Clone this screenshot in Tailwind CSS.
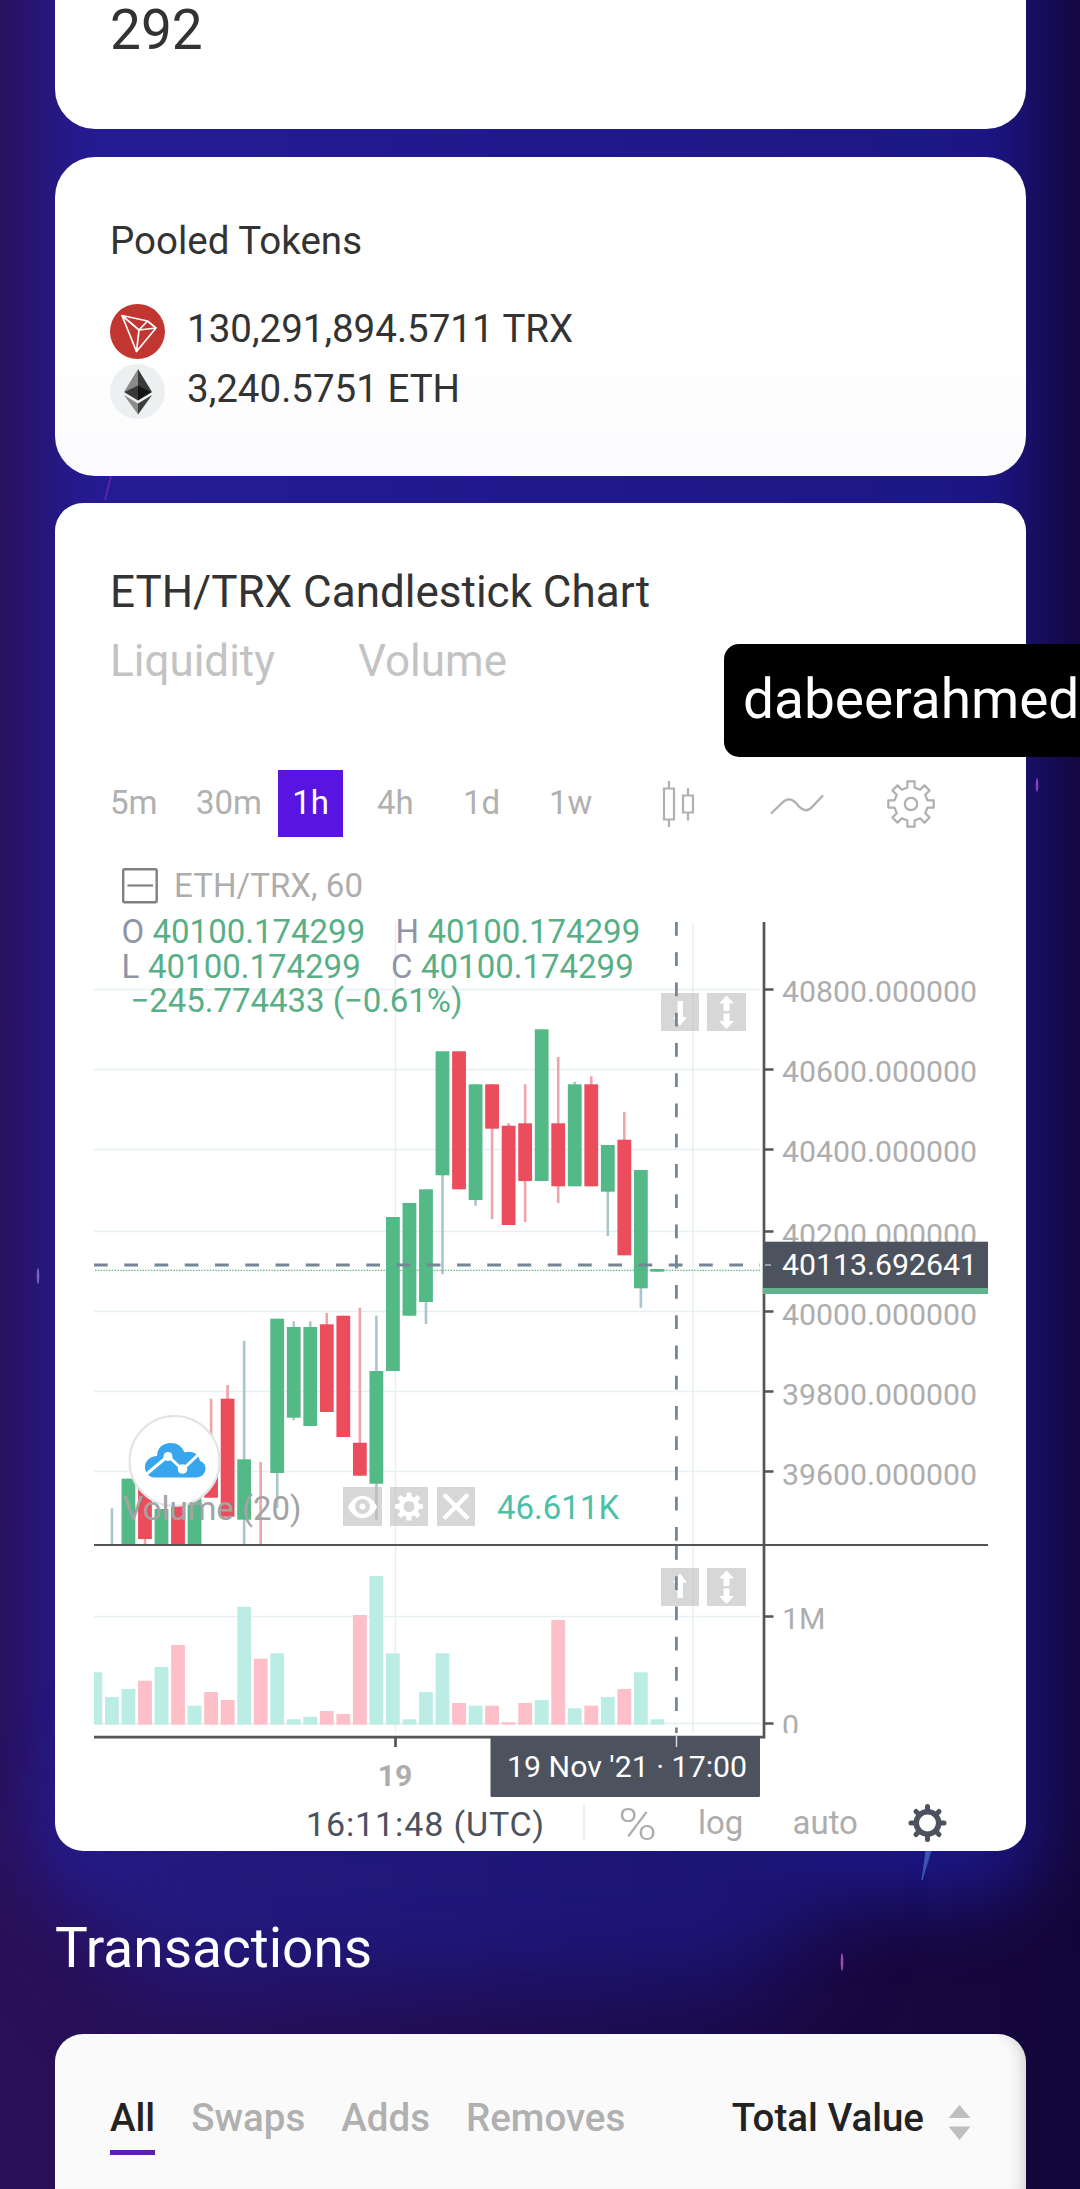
<!DOCTYPE html>
<html lang="en">
  <head>
    <meta charset="UTF-8">
    <title>ETH/TRX Pool</title>
    <script src="https://cdn.jsdelivr.net/npm/@tailwindcss/browser@4"></script>
  </head>

  <body class="relative w-[1080px] h-[2189px] overflow-hidden bg-linear-to-r from-[#2a1058] to-[#13063a] font-[Roboto,sans-serif] text-[#333]">

    <!-- background glow -->
    <div class="absolute inset-0 overflow-hidden">
      <div class="absolute left-[36px] -top-[200px] w-[1002px] h-[2100px] rounded-[60px] bg-linear-to-r from-[#251c94] to-[#1b1684] blur-[36px]"></div>
      <div class="absolute left-[90px] top-[1760px] w-[720px] h-[230px] rounded-[100px] bg-linear-to-r from-[#241a80] to-[#1a1474] blur-[50px]"></div>
    </div>
    <svg class="absolute inset-0" width="1080" height="2189" viewBox="0 0 1080 2189">
      <path d="M111 476L105 500" stroke="#5a22a8" stroke-width="2"/>
      <path d="M931 1851L922 1880L926 1851Z" fill="#3b55b8" stroke="#3b55b8" stroke-width="1"/>
      <ellipse cx="842" cy="1962" rx="1.3" ry="9" fill="#9b4db4"/>
      <ellipse cx="1037" cy="785" rx="1.3" ry="7" fill="#8a3fc0"/>
      <ellipse cx="38" cy="1276" rx="1.3" ry="8" fill="#7a5fc0"/>
    </svg>

    <main class="relative px-[55px] pr-[54px]">
      <section class="h-[129px] bg-white rounded-b-[40px] px-[55px]">
        <div class="text-[55px] leading-[60px]">292</div>
      </section>

      <section class="mt-7 h-[319px] bg-linear-to-b from-white from-60% to-[#fbfafd] rounded-[40px] px-[55px] pt-[59px]">
        <h2 class="text-[38.5px] leading-[50px]">Pooled Tokens</h2>
        <div class="mt-[35px] flex items-center h-[60px] gap-[22px]">
          <svg class="size-[55px]" viewBox="0 0 55 55">
            <circle cx="27.5" cy="27.5" r="27.5" fill="#c23631"/>
            <g fill="none" stroke="#fff" stroke-width="1.7" stroke-linejoin="round">
              <path d="M12 11.500L37.500 17L46 24L26.500 47.500Z"/>
              <path d="M12 11.500L29 26L26.500 47.500M29 26L46 24M29 26L37.500 17"/>
            </g>
          </svg>
          <span class="text-[38.5px] leading-[50px] pb-[4px]">130,291,894.5711 TRX</span>
        </div>
        <div class="flex items-center h-[60px] gap-[22px]">
          <svg class="size-[55px]" viewBox="0 0 55 55">
            <circle cx="27.5" cy="27.5" r="27.5" fill="#ecf0f1"/>
            <path d="M28 5L14 28L28 22Z" fill="#8a8a8a"/>
            <path d="M28 5L42 28L28 22Z" fill="#383838"/>
            <path d="M28 21.500L14 28L28 36.500Z" fill="#393939"/>
            <path d="M28 21.500L42 28L28 36.500Z" fill="#141414"/>
            <path d="M14 31L28 39.500V50.500Z" fill="#8c8c8c"/>
            <path d="M42 31L28 39.500V50.500Z" fill="#3c3c3b"/>
          </svg>
          <span class="text-[38.5px] leading-[50px] pb-[4px]">3,240.5751 ETH</span>
        </div>
      </section>

      <section class="mt-[27px] h-[1348px] bg-white rounded-[28px] pt-[59px] overflow-hidden">
        <h2 class="px-[55px] text-[44px] leading-[60px]">ETH/TRX Candlestick Chart</h2>
        <div class="mt-[9px] px-[55px] flex text-[44px] leading-[60px] text-[#c3c3c3]">
          <span class="w-[248px]">Liquidity</span>
          <span>Volume</span>
        </div>

        <!-- chart toolbar -->
        <div class="mt-[79px] pl-[55px] flex items-center h-[67px] text-[33px] leading-[44px] text-[#b0b0b0]">
          <span class="w-[86px] pb-[2px]">5m</span>
          <span class="w-[82px] pb-[2px]">30m</span>
          <span class="w-[65px] h-full pb-[2px] flex items-center justify-center bg-[#5814e0] text-white">1h</span>
          <span class="w-[87px] pl-[34px] pb-[2px]">4h</span>
          <span class="w-[86px] pl-[33px] pb-[2px]">1d</span>
          <span class="w-[92px] pl-[33px] pb-[2px]">1w</span>
          <svg class="ml-[54px] w-[34px] h-12" viewBox="0 0 34 48" fill="none" stroke="#b0b0b0" stroke-width="2.2">
            <path d="M7 1V8M7 40V47M2 8.500H12V39.500H2ZM26 8V15M26 33V40.500M21 15.500H31V32.500H21Z"/>
          </svg>
          <svg class="ml-[74px] w-[54px] h-6" viewBox="0 0 54 24" fill="none" stroke="#b0b0b0" stroke-width="2.4">
            <path d="M1 21.500L12 11C17 6 21 6 26 11L29 14.500C34 19.500 38 19.500 42 15L53 3.500"/>
          </svg>
          <svg class="ml-[62px] size-[50px]" viewBox="-25 -25 50 50" fill="none" stroke="#b0b0b0" stroke-width="2.2" stroke-linejoin="round">
            <path id="gearOutline"/>
            <circle r="6.200"/>
          </svg>
        </div>

        <svg class="mt-2 block" width="971" height="1006" viewBox="55 845 971 1006">
          <!-- grid -->
          <g stroke="#e6f0f2" stroke-width="1.500">
            <path d="M94 989.500H760M94 1069.500H760M94 1149.500H760M94 1231.500H760M94 1311.500H760M94 1391.500H760M94 1471.500H760M94 1616.500H760M94 1723.500H760"/>
            <path d="M395.500 923V1733M693 923V1733"/>
          </g>

          <g id="volumeBars"></g>
          <g id="candles"></g>

          <circle cx="174.500" cy="1461" r="45" fill="#fff" stroke="#e3e3e6" stroke-width="2"/>
          <g>
            <path d="M155 1477.500C148 1477.500 145 1472 145 1467C145 1461 150 1456 157 1456C157 1448 163 1443 170.500 1443C177 1443 182 1446 184.500 1452.500C191 1450.500 198.500 1453 200 1461C203.500 1462 205.500 1465 205.500 1468.500C205.500 1473.500 201.500 1477.500 196 1477.500Z" fill="#37a6ef"/>
            <path d="M146 1474.500L168 1456L182.500 1469.500L199 1454" fill="none" stroke="#fff" stroke-width="3"/>
            <circle cx="168" cy="1456.500" r="4.500" fill="#fff"/>
            <circle cx="182.500" cy="1469" r="4.800" fill="#fff"/>
          </g>

          <!-- pane buttons -->
          <g fill="#bdbdbd" fill-opacity="0.600">
            <rect x="661" y="993" width="38" height="38"/>
            <rect x="707" y="993" width="39" height="38"/>
            <rect x="661" y="1568" width="38" height="38"/>
            <rect x="707" y="1568" width="39" height="38"/>
            <rect x="343" y="1487" width="39" height="39"/>
            <rect x="390" y="1487" width="38" height="39"/>
            <rect x="437" y="1487" width="38" height="39"/>
          </g>
          <g fill="#fff">
            <path d="M677.500 1001H683V1017H687L680 1026L673 1017H677.500Z"/>
            <path d="M677.500 1598H683V1582.500H687L680 1573.500L673 1582.500H677.500Z"/>
            <path id="resizeArrows" d="M726.500 995.500L734 1003.500H729.500V1011H723.500V1003.500H719ZM726.500 1029L734 1021H729.500V1013.500H723.500V1021H719Z"/>
            <use href="#resizeArrows" y="575"/>
            <path d="M348 1507C355 1492 370 1492 377 1507C370 1522 355 1522 348 1507Z"/>
            <circle cx="362.500" cy="1506.500" r="7.500" fill="#d6d6d6"/>
            <circle cx="362.500" cy="1506.500" r="3"/>
            <path id="gearSolid" fill-rule="evenodd" transform="translate(409 1506.500)"/>
          </g>
          <path d="M444 1494.500L468 1518.500M468 1494.500L444 1518.500" stroke="#fff" stroke-width="4.500"/>

          <!-- last price and crosshair -->
          <path d="M95 1270.300H760" stroke="#53b987" stroke-width="1.300" stroke-dasharray="1.400 1.400"/>
          <g stroke="#758696" stroke-width="2.800">
            <path d="M94 1265H760" stroke-dasharray="13.750 16.500"/>
            <path d="M676.400 922V1545" stroke-dasharray="13.750 16.500"/>
            <path d="M676.400 1546V1733" stroke-dasharray="13.750 16.500"/>
          </g>

          <!-- axes -->
          <g stroke="#555">
            <path d="M94 1545H988" stroke-width="2"/>
            <path d="M94 1737.200H765.300M764 922V1738" stroke-width="2.700"/>
            <path d="M765 989.500H773.500M765 1069.500H773.500M765 1149.500H773.500M765 1231.500H773.500M765 1311.500H773.500M765 1391.500H773.500M765 1471.500H773.500M765 1616.500H773.500M765 1723.500H773.500M395.500 1738V1747" stroke-width="2.700"/>
          </g>
          <g font-size="30.250" fill="#adadad">
            <text x="782" y="1002">40800.000000</text>
            <text x="782" y="1082">40600.000000</text>
            <text x="782" y="1162">40400.000000</text>
            <text x="782" y="1244.500">40200.000000</text>
            <text x="782" y="1324.500">40000.000000</text>
            <text x="782" y="1404.500">39800.000000</text>
            <text x="782" y="1484.500">39600.000000</text>
            <text x="782" y="1628.500">1M</text>
            <text x="782" y="1736">0</text>
            <text x="395" y="1786" text-anchor="middle" font-weight="700">19</text>
          </g>
          <rect x="780" y="1733" width="30" height="8" fill="#fff"/>

          <rect x="763" y="1286" width="225" height="8" fill="#61b28d"/>
          <rect x="763" y="1241.700" width="225" height="46.300" fill="#4c525e"/>
          <path d="M765 1265H771" stroke="#9aa0a8" stroke-width="2"/>
          <text x="782" y="1274.700" font-size="30.250" fill="#fff">40113.692641</text>

          <rect x="490.500" y="1736" width="269.500" height="61" rx="1.500" fill="#4c525e"/>
          <path d="M676.500 1736V1747" stroke="#d5d8dc" stroke-width="1.500"/>
          <text x="507" y="1777.300" font-size="30.250" fill="#fff" textLength="240">19 Nov '21 · 17:00</text>

          <!-- legend -->
          <rect x="123.200" y="869.200" width="33.500" height="33" rx="1.500" fill="none" stroke="#808080" stroke-width="2.400"/>
          <path d="M127.500 885.500H153" stroke="#808080" stroke-width="2.200"/>
          <g font-size="33">
            <text x="174" y="897" fill="#adadad" textLength="189">ETH/TRX, 60</text>
            <g fill="#8f95a6">
              <text x="121.500" y="942.700">O</text>
              <text x="395.500" y="942.700">H</text>
              <text x="121.500" y="977.700">L</text>
              <text x="391" y="977.700">C</text>
            </g>
            <g fill="#58af86">
              <text x="152.500" y="942.700">40100.174299</text>
              <text x="427.500" y="942.700">40100.174299</text>
              <text x="148" y="977.700">40100.174299</text>
              <text x="421" y="977.700">40100.174299</text>
              <text x="130.500" y="1011.700" textLength="332">−245.774433 (−0.61%)</text>
            </g>
            <text x="122.500" y="1519.700" fill="#a3a3a3" textLength="179">Volume (20)</text>
            <text x="497" y="1518.700" fill="#4dbfa9">46.611K</text>
          </g>

          <!-- bottom bar -->
          <text x="306" y="1835.700" font-size="34" fill="#4c525e" textLength="238">16:11:48 (UTC)</text>
          <path d="M584 1805V1841" stroke="#e3e5e8" stroke-width="1.500"/>
          <g fill="#adadad">
            <text x="618" y="1839.500" font-size="44" font-weight="300" textLength="39" lengthAdjust="spacingAndGlyphs">%</text>
            <text x="698" y="1834" font-size="33">log</text>
            <text x="792.500" y="1834" font-size="33">auto</text>
          </g>
          <g transform="translate(927.500 1823)" stroke="#4c525e" fill="none">
            <circle r="11.200" stroke-width="5.500"/>
            <path d="M0 -13V-16.500M0 13V16.500M-13 0H-16.500M13 0H16.500M-9.500 -9.500L-11.500 -11.500M9.500 9.500L11.500 11.500M-9.500 9.500L-11.500 11.500M9.500 -9.500L11.500 -11.500" stroke-width="5" stroke-linecap="round"/>
          </g>
        </svg>
      </section>

      <h1 class="mt-16 text-[55px] leading-[66px] text-white">Transactions</h1>

      <section class="mt-[53px] h-[155px] bg-[#fafafa] rounded-t-[28px] px-[55px] pt-[59px] flex items-start text-[38.5px] leading-[50px] font-medium text-[#b0b0b0] shadow-[inset_-14px_0_16px_-12px_rgba(0,0,0,0.2)]">
        <div class="flex gap-9">
          <span class="h-[62px] border-b-[5px] border-[#5a1fb8] text-[#222]">All</span>
          <span>Swaps</span>
          <span>Adds</span>
          <span>Removes</span>
        </div>
        <div class="ml-auto flex text-[#222]">
          <span>Total Value</span>
          <svg class="ml-6 mt-3 w-[23px] h-9" viewBox="0 0 23 36" fill="#bfbfbf">
            <path d="M11.500 0L22.500 13H0.500ZM11.500 35L22.500 21.500H0.500Z"/>
          </svg>
        </div>
      </section>
    </main>

    <div class="absolute left-[724px] top-[644px] w-[356px] h-[113px] rounded-l-[15px] bg-black text-white text-[55px] leading-[110px] pl-[19px] whitespace-nowrap overflow-hidden">dabeerahmed</div>

  <script>
    const STEP = 16.53;
    const FIRST_X = 111.9;

    // [up, body top, body bottom, high, low]
    const candles = [
      [1, 1560, 1570, 1508.3, 1545],
      [1, 1478.7, 1545, 1478.7, 1545],
      [0, 1470, 1539, 1470, 1545],
      [1, 1509, 1545, 1509, 1545],
      [0, 1495, 1545, 1495, 1545],
      [1, 1490, 1545, 1490, 1545],
      [0, 1462, 1497.7, 1398.7, 1497.7],
      [0, 1398.7, 1516.7, 1385, 1516.7],
      [1, 1459.3, 1519.7, 1340.7, 1545],
      [0, 1560, 1570, 1462, 1545],
      [1, 1318.7, 1473, 1318.7, 1508],
      [1, 1327, 1417.7, 1321.3, 1420.3],
      [1, 1327, 1426, 1321.3, 1426],
      [0, 1324.3, 1412, 1313, 1412],
      [0, 1315.7, 1437, 1315.7, 1437],
      [0, 1442.7, 1475.7, 1307.7, 1475.7],
      [1, 1371, 1483.7, 1315.7, 1519.7],
      [1, 1217, 1371, 1217, 1371],
      [1, 1203, 1315.7, 1203, 1315.7],
      [1, 1189.3, 1302, 1189.3, 1324],
      [1, 1051.3, 1175.3, 1051.3, 1274.3],
      [0, 1051.3, 1189.3, 1051.3, 1189.3],
      [1, 1084.3, 1200, 1084.3, 1205.7],
      [0, 1084.3, 1128.7, 1084.3, 1219.3],
      [0, 1125.7, 1225, 1123.3, 1225],
      [0, 1123.3, 1181, 1084.3, 1222],
      [1, 1029.3, 1181, 1029.3, 1181],
      [0, 1123.3, 1186.3, 1057, 1203],
      [1, 1084.3, 1186.3, 1081.7, 1186.3],
      [0, 1084.3, 1186.3, 1076.3, 1186.3],
      [1, 1145, 1191.7, 1145, 1236],
      [0, 1139.7, 1255.3, 1112, 1255.3],
      [1, 1170, 1288.3, 1170, 1307.7],
      [1, 1269, 1271.7, 1269, 1271.7],
    ];

    // [up, bar top], starts one slot before the first candle
    const volumes = [
      [1, 1672.3], [1, 1697], [1, 1689], [0, 1680.7], [1, 1667], [0, 1645], [1, 1705.7],
      [0, 1692], [0, 1700], [1, 1606.7], [0, 1658.7], [1, 1653.3], [1, 1719.3], [1, 1716.7],
      [0, 1711], [0, 1714], [0, 1615], [1, 1576], [1, 1653.3], [1, 1719.3], [1, 1692],
      [1, 1653.3], [0, 1703], [1, 1705.7], [0, 1705.7], [0, 1722.3], [0, 1703], [1, 1700],
      [0, 1620], [1, 1708.3], [0, 1705.7], [1, 1697], [0, 1689], [1, 1672.3], [1, 1719.3],
    ];

    function rect(x, y, w, h, fill) {
      return `<rect x="${x}" y="${y}" width="${w}" height="${h}" fill="${fill}"/>`;
    }

    let html = "";
    candles.forEach(([up, top, bottom, high, low], i) => {
      const x = FIRST_X + i * STEP;
      html += rect(x - 1.3, high, 2.6, low - high, up ? "#a9c6cd" : "#f0a3ab");
      if (top < 1545) html += rect(x - 6.9, top, 13.8, bottom - top, up ? "#53b987" : "#eb4d5c");
    });
    document.getElementById("candles").innerHTML = html;

    html = "";
    volumes.forEach(([up, top], i) => {
      const x = Math.max(94, FIRST_X + (i - 1) * STEP - 6.9);
      const right = FIRST_X + (i - 1) * STEP + 6.9;
      html += rect(x, top, right - x, 1724.7 - top, up ? "#bcede4" : "#fdbfc8");
    });
    document.getElementById("volumeBars").innerHTML = html;

    // eight-toothed gear around the origin
    function gearPath(outer, inner, halfTooth, halfRoot) {
      let d = "";
      for (let i = 0; i < 8; i++) {
        const a = i * Math.PI / 4;
        [[inner, -halfRoot], [outer, -halfTooth], [outer, halfTooth], [inner, halfRoot]].forEach(([r, w], k) => {
          const px = r * Math.cos(a) - w * Math.sin(a);
          const py = r * Math.sin(a) + w * Math.cos(a);
          d += (i + k === 0 ? "M" : "L") + px.toFixed(2) + " " + py.toFixed(2);
        });
      }
      return d + "Z";
    }

    document.getElementById("gearOutline").setAttribute("d", gearPath(22.7, 16.5, 3.6, 3.6));
    document.getElementById("gearSolid").setAttribute("d",
      gearPath(14, 10, 2.4, 2.6) + "M-5.5 0A5.5 5.5 0 1 0 5.500 0A5.5 5.5 0 1 0 -5.5 0Z");
  </script>
  </body>
</html>
